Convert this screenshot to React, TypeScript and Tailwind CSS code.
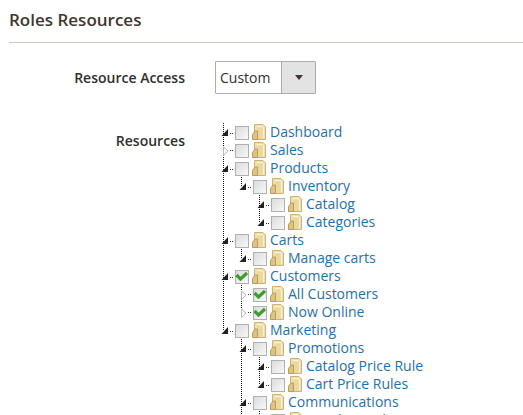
import React from 'react';

type TreeNode = {
  label: string;
  checked?: boolean;
  closed?: boolean;
  children?: TreeNode[];
};

const tree: TreeNode[] = [
  { label: 'Dashboard' },
  { label: 'Sales', closed: true },
  {
    label: 'Products',
    children: [
      { label: 'Inventory', children: [{ label: 'Catalog' }, { label: 'Categories' }] },
    ],
  },
  { label: 'Carts', children: [{ label: 'Manage carts' }] },
  {
    label: 'Customers',
    checked: true,
    children: [
      { label: 'All Customers', checked: true, closed: true },
      { label: 'Now Online', checked: true, closed: true },
    ],
  },
  {
    label: 'Marketing',
    children: [
      {
        label: 'Promotions',
        children: [{ label: 'Catalog Price Rule' }, { label: 'Cart Price Rules' }],
      },
      { label: 'Communications', children: [{ label: 'Email Templates' }] },
      { label: 'SEO & Search' },
    ],
  },
];

function Toggle({ closed }: { closed?: boolean }) {
  return (
    <svg width="15" height="18" viewBox="0 0 15 18" className="-ml-[3px] shrink-0">
      {closed ? (
        <path d="M3.5 6 L8 10 L3.5 14.5 Z" fill="#fff" stroke="#b8b8b8" />
      ) : (
        <path d="M1.5 13 H8 V6 Z" fill="#222" />
      )}
      <rect x="10" y={closed ? 9 : 10} width="1" height="1" fill="#333" />
      <rect x="12" y={closed ? 9 : 10} width="1" height="1" fill="#333" />
    </svg>
  );
}

function Checkbox({ checked }: { checked?: boolean }) {
  return (
    <span className="relative mr-[3px] mt-[2px] h-[14px] w-[14px] shrink-0 border-[1.5px] border-[#b0b0b0] bg-gradient-to-br from-[#dcdcdc] to-[#f8f8f8]">
      {checked && (
        <svg width="13" height="11" viewBox="0 0 13 11" className="absolute -left-[1px] top-[0px]">
          <path d="M1.5 4 L5.5 8 L12 2" fill="none" stroke="#3c9e2c" strokeWidth="3.2" />
        </svg>
      )}
    </span>
  );
}

function Folder() {
  return (
    <svg width="14" height="16" viewBox="0 0 14 16" className="shrink-0">
      <path d="M2.5 0.5 H11 L13.5 3 V15.5 H2.5 Z" fill="#f0dfa8" stroke="#cdb377" />
      <path d="M5 2.5 H10.5 L11.5 4 V14" fill="none" stroke="#fbf2cf" />
      <path d="M5.5 4 H10.5 V15 H5.5 Z" fill="#ecd79c" />
      <path d="M0.5 15.5 V10.5 L3 7 H5.5 V15.5 Z" fill="#dcc38a" stroke="#b99c60" />
    </svg>
  );
}

function TreeList({ nodes }: { nodes: TreeNode[] }) {
  return (
    <ul>
      {nodes.map((node, i) => (
        <li key={node.label} className="relative">
          <span
            className={`absolute left-0 top-0 w-px bg-[linear-gradient(#111_50%,transparent_50%)] bg-[length:1px_2px] ${
              i === nodes.length - 1 ? 'h-[9px]' : 'bottom-0'
            }`}
          />
          <div className="relative flex h-[18px] items-center">
            <Toggle closed={node.closed} />
            <Checkbox checked={node.checked} />
            <Folder />
            <a className="ml-[4px] whitespace-nowrap text-[14px] leading-[18px] text-[#1f70ad]">
              {node.label}
            </a>
          </div>
          {node.children && (
            <div className="ml-[18px]">
              <TreeList nodes={node.children} />
            </div>
          )}
        </li>
      ))}
    </ul>
  );
}

export default function App() {
  return (
    <div className="h-[415px] w-[523px] overflow-hidden bg-white font-['Open_Sans',sans-serif] text-[#303030]">
      <div className="ml-[9px] border-b border-[#cfc8c0] pb-[11px] pt-[9px]">
        <h2 className="text-[17px] font-semibold leading-[22px] text-[#41362f]">Roles Resources</h2>
      </div>

      <div className="mt-[18px] flex items-center">
        <label className="w-[185px] text-right text-[14px] font-semibold">Resource Access</label>
        <div className="ml-[30px] flex h-[33px] w-[101px] overflow-hidden rounded-[1px] border border-[#adadad]">
          <span className="flex-1 pl-[4px] text-[14px] leading-[31px]">Custom</span>
          <span className="flex w-[34px] items-center justify-center border-l border-[#adadad] bg-[#e3e3e3]">
            <span className="h-0 w-0 border-x-[4px] border-t-[5px] border-x-transparent border-t-[#41362f]" />
          </span>
        </div>
      </div>

      <div className="mt-[29px] flex items-start">
        <label className="mt-[9px] w-[185px] text-right text-[14px] font-semibold leading-[18px]">
          Resources
        </label>
        <div className="ml-[38px]">
          <TreeList nodes={tree} />
        </div>
      </div>
    </div>
  );
}
